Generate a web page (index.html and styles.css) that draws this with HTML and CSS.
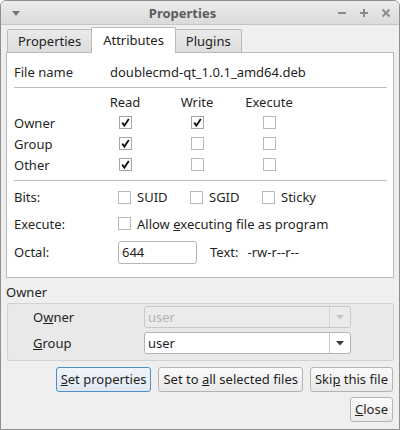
FILE: index.html
```html
<!DOCTYPE html>
<html>
<head>
<meta charset="utf-8">
<link rel="stylesheet" href="styles.css">
</head>
<body>
<div class="window">
  <div class="titlebar">
    <svg class="menu-arrow" width="8" height="5" viewBox="0 0 8 5"><path d="M0 0H8L4 5Z" fill="#7a7a7a"/></svg>
    <span class="title">Properties</span>
    <div class="controls">
      <svg width="10" height="10" viewBox="0 0 10 10"><path d="M1 5H9" stroke="#8a8a8a" stroke-width="2"/></svg>
      <svg width="10" height="10" viewBox="0 0 10 10"><path d="M1 5H9M5 1V9" stroke="#8a8a8a" stroke-width="2"/></svg>
      <svg width="10" height="10" viewBox="0 0 10 10"><path d="M1.5 1.5L8.5 8.5M8.5 1.5L1.5 8.5" stroke="#8a8a8a" stroke-width="1.8"/></svg>
    </div>
  </div>
  <div class="body">
    <div class="tabs">
      <div class="tab">Properties</div>
      <div class="tab active">Attributes</div>
      <div class="tab">Plugins</div>
    </div>
    <div class="panel">
      <div class="file-row"><span class="file-label">File name</span><span>doublecmd-qt_1.0.1_amd64.deb</span></div>
      <div class="sep"></div>
      <div class="perm-grid">
        <span></span><span class="head">Read</span><span class="head">Write</span><span class="head">Execute</span>
        <span class="rl">Owner</span>
        <span class="cell"><span class="cb checked"><svg width="11" height="11" viewBox="0 0 11 11"><path d="M2.2 5.6L4.4 8.6L8.8 2" fill="none" stroke="#111" stroke-width="1.8"/></svg></span></span>
        <span class="cell"><span class="cb checked"><svg width="11" height="11" viewBox="0 0 11 11"><path d="M2.2 5.6L4.4 8.6L8.8 2" fill="none" stroke="#111" stroke-width="1.8"/></svg></span></span>
        <span class="cell"><span class="cb"></span></span>
        <span class="rl">Group</span>
        <span class="cell"><span class="cb checked"><svg width="11" height="11" viewBox="0 0 11 11"><path d="M2.2 5.6L4.4 8.6L8.8 2" fill="none" stroke="#111" stroke-width="1.8"/></svg></span></span>
        <span class="cell"><span class="cb"></span></span>
        <span class="cell"><span class="cb"></span></span>
        <span class="rl">Other</span>
        <span class="cell"><span class="cb checked"><svg width="11" height="11" viewBox="0 0 11 11"><path d="M2.2 5.6L4.4 8.6L8.8 2" fill="none" stroke="#111" stroke-width="1.8"/></svg></span></span>
        <span class="cell"><span class="cb"></span></span>
        <span class="cell"><span class="cb"></span></span>
      </div>
      <div class="sep sep2"></div>
      <div class="opt-row bits">
        <span class="opt-label">Bits:</span>
        <span class="opt"><span class="cb"></span><span>SUID</span></span>
        <span class="opt"><span class="cb"></span><span>SGID</span></span>
        <span class="opt"><span class="cb"></span><span>Sticky</span></span>
      </div>
      <div class="opt-row">
        <span class="opt-label">Execute:</span>
        <span class="opt"><span class="cb"></span><span>Allow <u>e</u>xecuting file as program</span></span>
      </div>
      <div class="opt-row octal">
        <span class="opt-label">Octal:</span>
        <span class="input">644</span>
        <span class="text-label">Text:</span>
        <span class="text-val">-rw-r--r--</span>
      </div>
    </div>
    <div class="owner-title">Owner</div>
    <div class="groupbox">
      <div class="g-row">
        <span class="g-label">O<u>w</u>ner</span>
        <span class="combo disabled"><span class="combo-text">user</span><span class="combo-btn"><svg width="8" height="5" viewBox="0 0 8 5"><path d="M0 0H8L4 4.5Z" fill="#c4c4c4"/></svg></span></span>
      </div>
      <div class="g-row">
        <span class="g-label"><u>G</u>roup</span>
        <span class="combo"><span class="combo-text">user</span><span class="combo-btn"><svg width="8" height="5" viewBox="0 0 8 5"><path d="M0 0H8L4 4.5Z" fill="#3a3a3a"/></svg></span></span>
      </div>
    </div>
    <div class="buttons">
      <span class="btn focus"><u>S</u>et properties</span>
      <span class="btn">Set to <u>a</u>ll selected files</span>
      <span class="btn">Ski<u>p</u> this file</span>
    </div>
    <div class="buttons close-row">
      <span class="btn"><u>C</u>lose</span>
    </div>
  </div>
</div>
</body>
</html>
```

FILE: styles.css
```css
html, body {
  margin: 0;
  padding: 0;
  background: #ffffff;
}
body {
  font-family: "Noto Sans", sans-serif;
  font-size: 13px;
  color: #1f1f1f;
}
u {
  text-decoration: underline;
  text-underline-offset: 1px;
}
.window {
  width: 400px;
  height: 430px;
  box-sizing: border-box;
  border: 1px solid #8f8f8f;
  border-radius: 6px 6px 0 0;
  background: #efefef;
  display: flex;
  flex-direction: column;
  overflow: hidden;
}
.titlebar {
  flex: none;
  height: 23px;
  border-bottom: 1px solid #c4c4c4;
  background: linear-gradient(#ececec, #dadada);
  display: flex;
  align-items: center;
  padding: 0 8px 0 11px;
}
.menu-arrow {
  flex: none;
  margin-top: 1px;
}
.title {
  flex: 1;
  text-align: center;
  font-weight: bold;
  color: #5c5c5c;
  font-size: 13px;
  padding-left: 8px;
}
.controls {
  display: flex;
  gap: 12px;
  align-items: center;
  margin-top: 1px;
}
.body {
  flex: 1;
  display: flex;
  flex-direction: column;
  padding: 2px 5px 0 5px;
}
.tabs {
  display: flex;
  align-items: flex-end;
  margin-left: 1px;
  margin-bottom: -1px;
  position: relative;
  z-index: 1;
}
.tab {
  height: 22px;
  line-height: 22px;
  margin-bottom: 1px;
  padding: 0 10px;
  border: 1px solid #bababa;
  border-bottom: none;
  border-radius: 2px 2px 0 0;
  background: linear-gradient(#eaeaea, #dcdcdc);
  color: #222;
}
.tab.active {
  height: 25px;
  line-height: 24px;
  margin-bottom: 0;
  padding: 0 11px;
  background: #ffffff;
  margin-left: -1px;
  margin-right: -1px;
}
.panel {
  border: 1px solid #bababa;
  background: #ffffff;
  padding: 9px 6px 11px 7px;
}
.file-row {
  height: 20px;
  line-height: 20px;
  display: flex;
}
.file-label {
  width: 96px;
  flex: none;
}
.sep {
  height: 1px;
  background: #bdbdbd;
  margin-top: 5px;
}
.perm-grid {
  margin-top: 3px;
  display: grid;
  grid-template-columns: 69px 60px 60px 60px;
  grid-auto-rows: 21px;
  column-gap: 12px;
  align-items: center;
}
.head {
  text-align: center;
}
.cell {
  display: flex;
  justify-content: center;
}
.cb {
  width: 11px;
  height: 11px;
  border: 1px solid #b9b9b9;
  background: #ffffff;
  display: inline-flex;
  align-items: center;
  justify-content: center;
  flex: none;
}
.cb.checked {
  border-color: #a6a6a6;
}
.sep2 {
  margin-top: 5px;
}
.opt-row {
  display: flex;
  align-items: center;
  height: 27px;
}
.bits {
  margin-top: 3px;
  height: 26px;
}
.opt-label {
  width: 104px;
  flex: none;
}
.opt {
  display: inline-flex;
  align-items: center;
  gap: 6px;
  width: 72px;
  white-space: nowrap;
}
.octal {
  height: 28px;
  margin-top: 1px;
}
.input {
  box-sizing: border-box;
  width: 79px;
  height: 23px;
  line-height: 21px;
  border: 1px solid #b6b6b6;
  border-radius: 3px;
  background: #fff;
  padding-left: 3px;
}
.text-label {
  margin-left: 13px;
}
.text-val {
  margin-left: 9px;
}
.owner-title {
  margin-top: 6px;
  height: 16px;
  line-height: 16px;
}
.groupbox {
  margin-top: 3px;
  margin-left: 1px;
  border: 1px solid #d2d2d2;
  border-radius: 2px;
  background: #e9e9e9;
  padding: 2px 0 6px 25px;
  display: flex;
  flex-direction: column;
  gap: 4px;
}
.g-row {
  display: flex;
  align-items: center;
}
.g-label {
  width: 111px;
  flex: none;
}
.combo {
  box-sizing: border-box;
  width: 207px;
  height: 22px;
  border: 1px solid #b4b4b4;
  border-radius: 3px;
  background: #ffffff;
  display: flex;
  align-items: stretch;
}
.combo-text {
  flex: 1;
  line-height: 20px;
  padding-left: 3px;
}
.combo-btn {
  width: 20px;
  border-left: 1px solid #c6c6c6;
  display: flex;
  align-items: center;
  justify-content: center;
}
.combo.disabled {
  background: #ebebeb;
  border-color: #c8c8c8;
  color: #b3b3b3;
}
.combo.disabled .combo-btn {
  border-left-color: #d4d4d4;
}
.buttons {
  display: flex;
  justify-content: flex-end;
  gap: 7px;
  margin-top: 6px;
  margin-right: 1px;
}
.close-row {
  margin-top: 5px;
}
.btn {
  box-sizing: border-box;
  height: 25px;
  line-height: 23px;
  padding: 0 4px;
  border: 1px solid #b4b4b4;
  border-radius: 3px;
  background: linear-gradient(#fbfbfb, #e9e9e9);
  white-space: nowrap;
}
.btn.focus {
  border-color: #4f8ec6;
  background: linear-gradient(#f0f5fa, #dfe8f1);
}
```
